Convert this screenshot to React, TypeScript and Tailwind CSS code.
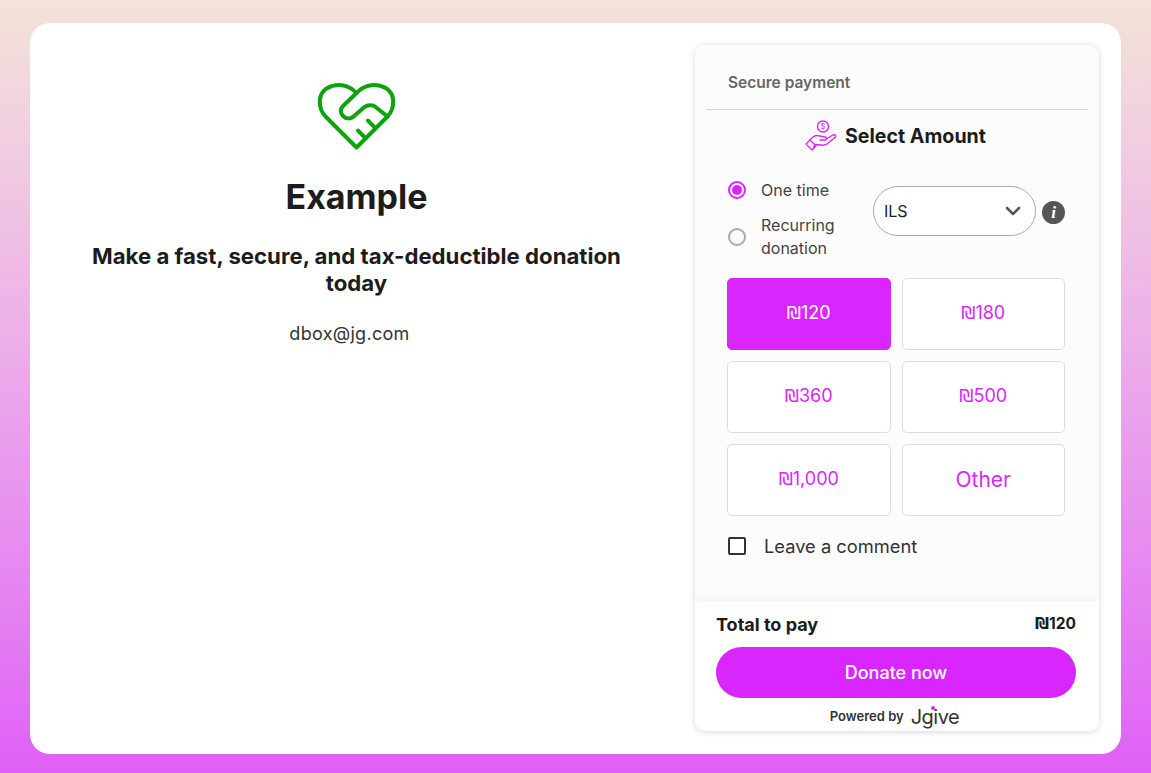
import React, { useState } from 'react';
import { ChevronDown } from 'lucide-react';

const AMOUNTS = ['120', '180', '360', '500', '1,000', 'Other'];

function Shekel() {
  return <span className="font-['DejaVu_Sans',sans-serif]">₪</span>;
}

function HeartLogo() {
  return (
    <svg width="77" height="68" viewBox="0 0 77 68" fill="none" stroke="#0ca30c" strokeWidth="4" strokeLinecap="round" strokeLinejoin="round" className="overflow-visible">
      <path d="M38.5 65.5 L7.5 34.5 C-0.5 26 0 12 8.5 6.5 C18 1 30 2 38.5 11 C47 2 59 1 68.5 6.5 C77 12 77.5 26 69.5 34.5 Z" />
      <path d="M38.5 11 L25 24 C22 27 22 31 25 34 C28 37 32 37 35 35 L43 28 C47 24 52 22 57 24.5 L69.5 34.5" />
      <path d="M50 38.7 L57.75 46.45" />
      <path d="M40 48.7 L47.75 56.45" />
    </svg>
  );
}

function HandCoin() {
  return (
    <svg width="32" height="32" viewBox="0 0 32 32" fill="none" stroke="#d926ff" strokeWidth="1.4" strokeLinecap="round" strokeLinejoin="round">
      <circle cx="18" cy="6.5" r="5.5" />
      <text x="18" y="9.2" textAnchor="middle" fontSize="7.5" fill="#d926ff" stroke="none" fontFamily="Inter, sans-serif">$</text>
      <path d="M5 20 C8 16 12 15 15 16 L20 17 C22 17.5 22 20 20 20 L15 20" />
      <path d="M21 19 L28 15 C30 14 31.5 16 30 17.5 L22 24 C20 25.5 18 25.5 16 25 L11 24.5 L8.5 27" />
      <path d="M1 24 L5 20 L11 26 L7 30 Z" />
    </svg>
  );
}

function Jgive() {
  return (
    <span className="relative text-[20px] leading-none tracking-[-0.5px] text-[#333] font-normal">
      Jgive
      <span className="absolute left-[20.5px] top-[-1px] w-[4px] h-[4px] rounded-full bg-[#d926ff]" />
    </span>
  );
}

export default function App() {
  const [amount, setAmount] = useState('120');
  const [recurring, setRecurring] = useState(false);
  const [comment, setComment] = useState(false);

  return (
    <div className="h-[773px] overflow-hidden bg-gradient-to-b from-[#f3e3d8] to-[#df5ff6] pt-[23px] pb-[19px] px-[30px] font-['Inter',sans-serif] text-[#1c1c1c]">
      <div className="h-full bg-white rounded-[20px] flex pt-[22px] pb-[23px] pl-[30px] pr-[22px]">
        <div className="flex-1 min-w-0 flex flex-col items-center pt-[37px] pr-[42px]">
          <HeartLogo />
          <h1 className="mt-[25px] text-[34px] leading-[44px] font-bold">Example</h1>
          <p className="mt-[23px] w-[570px] text-center text-[22.2px] leading-[27px] font-bold">
            Make a fast, secure, and tax-deductible donation today
          </p>
          <p className="mt-[26px] mr-[14px] text-[18px] leading-[24px] tracking-[0.3px] text-[#333]">dbox@jg.com</p>
        </div>

        <div className="w-[404px] shrink-0 rounded-[10px] bg-[#fcfcfc] shadow-[0_1px_6px_rgba(0,0,0,0.16)] flex flex-col overflow-hidden">
          <div className="mx-[11px] h-[65px] border-b border-[#d4d4d4] pl-[22px] pt-[28px] text-[15.5px] leading-[20px] font-semibold text-[#666]">
            Secure payment
          </div>

          <div className="flex items-center justify-center h-[52px] gap-[8px] pr-[3px]">
            <HandCoin />
            <h2 className="text-[19.6px] leading-[26px] font-bold">Select Amount</h2>
          </div>

          <div className="flex items-start pl-[33px] pr-[34px] mt-[15px]">
            <div className="w-[145px] text-[16px] text-[#444]">
              <button onClick={() => setRecurring(false)} className="flex items-center gap-[15px] h-[26px]">
                <span className={`w-[18px] h-[18px] rounded-full border-2 flex items-center justify-center ${recurring ? 'border-[#aaa]' : 'border-[#d926ff]'}`}>
                  {!recurring && <span className="w-[10px] h-[10px] rounded-full bg-[#d926ff]" />}
                </span>
                One time
              </button>
              <button onClick={() => setRecurring(true)} className="mt-[11px] flex items-center gap-[15px] text-left leading-[23px]">
                <span className={`w-[18px] h-[18px] rounded-full border-2 flex items-center justify-center ${recurring ? 'border-[#d926ff]' : 'border-[#aaa]'}`}>
                  {recurring && <span className="w-[10px] h-[10px] rounded-full bg-[#d926ff]" />}
                </span>
                <span>Recurring<br />donation</span>
              </button>
            </div>
            <div className="mt-[9px] w-[163px] h-[50px] rounded-full border border-[#aaa] bg-white flex items-center justify-between pl-[10px] pr-[10px] text-[16px] text-[#222]">
              ILS
              <ChevronDown size={24} strokeWidth={2.5} className="text-[#555]" />
            </div>
            <span className="mt-[24px] ml-[6px] w-[23px] h-[23px] rounded-full bg-[#555] flex items-center justify-center text-white text-[17px] font-bold italic font-['Liberation_Serif',serif]">i</span>
          </div>

          <div className="grid grid-cols-2 gap-[11px] pl-[32px] pr-[34px] mt-[18px]">
            {AMOUNTS.map((a) => (
              <button
                key={a}
                onClick={() => setAmount(a)}
                className={`h-[72px] rounded-[5px] border text-center ${a === 'Other' ? 'text-[21px]' : 'text-[18px] pb-[3px]'} ${amount === a ? 'bg-[#d926ff] border-[#d926ff] text-white' : 'bg-white border-[#ddd] text-[#d926ff]'}`}
              >
                {a === 'Other' ? a : <><Shekel />{a}</>}
              </button>
            ))}
          </div>

          <label className="flex items-center gap-[18px] pl-[33px] mt-[18px] text-[18.3px] leading-[24px] text-[#333]">
            <input type="checkbox" checked={comment} onChange={(e) => setComment(e.target.checked)} className="appearance-none w-[18px] h-[18px] rounded-[2px] border-2 border-[#333] bg-white" />
            Leave a comment
          </label>

          <div className="mt-auto bg-white h-[129px] pl-[21px] pr-[23px] shadow-[0_-6px_10px_rgba(0,0,0,0.03)]">
            <div className="flex justify-between items-center h-[45px] font-bold">
              <span className="text-[18px]">Total to pay</span>
              <span className="text-[15.5px]"><Shekel />120</span>
            </div>
            <button className="w-full h-[51px] rounded-full bg-[#d926ff] text-white text-[18px] font-medium">Donate now</button>
            <div className="flex items-center justify-center gap-[7px] h-[37px] pr-[3px] text-[13px] font-semibold text-[#333]">
              Powered by <Jgive />
            </div>
          </div>
        </div>
      </div>
    </div>
  );
}
